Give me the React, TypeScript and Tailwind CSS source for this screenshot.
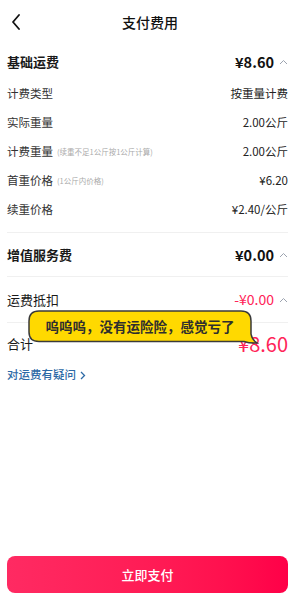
import type { ReactNode } from 'react'

const font = { fontFamily: '"Noto Sans CJK SC", "Noto Sans", sans-serif' }

function ChevronUp() {
  return (
    <svg width="9" height="6" viewBox="0 0 9 6" className="ml-[5px]" aria-hidden="true">
      <polyline points="1,5 4.5,1.5 8,5" fill="none" stroke="#9ca3af" strokeWidth="1" />
    </svg>
  )
}

function SubRow({ label, hint, value }: { label: string; hint?: string; value: string }) {
  return (
    <div className="flex h-[29px] items-center justify-between">
      <div className="flex items-center">
        <span className="text-[11.5px] text-[#333]">{label}</span>
        {hint && <span className="ml-[4px] text-[7.5px] text-[#aaa]">{hint}</span>}
      </div>
      <span className="text-[11.5px] text-[#222]">{value}</span>
    </div>
  )
}

function Divider() {
  return <div className="h-px bg-[#f0f0f0]" />
}

function SectionRow({ label, children, bold }: { label: string; children: ReactNode; bold?: boolean }) {
  return (
    <div className="flex h-full items-center justify-between">
      <span className={bold ? 'text-[13px] font-semibold text-[#1a1a1a]' : 'text-[13px] text-[#1a1a1a]'}>{label}</span>
      <div className="flex items-center">{children}</div>
    </div>
  )
}

export default function App() {
  return (
    <div className="relative flex h-[600px] w-[300px] flex-col bg-white" style={font}>
      {/* header */}
      <div className="relative flex h-[44px] items-center justify-center">
        <svg width="10" height="16" viewBox="0 0 10 16" className="absolute left-[11px] top-[14px]" aria-hidden="true">
          <polyline points="8,1 2,8 8,15" fill="none" stroke="#111" strokeWidth="1.8" strokeLinecap="round" strokeLinejoin="round" />
        </svg>
        <span className="text-[14px] font-medium text-[#111]">支付费用</span>
      </div>

      <div className="pl-[7px] pr-[12px]">
        <div className="h-[35px]">
          <SectionRow label="基础运费" bold>
            <span className="text-[14.5px] font-semibold text-[#111]">¥8.60</span>
            <ChevronUp />
          </SectionRow>
        </div>
        <SubRow label="计费类型" value="按重量计费" />
        <SubRow label="实际重量" value="2.00公斤" />
        <SubRow label="计费重量" hint="(续重不足1公斤按1公斤计算)" value="2.00公斤" />
        <SubRow label="首重价格" hint="(1公斤内价格)" value="¥6.20" />
        <SubRow label="续重价格" value="¥2.40/公斤" />
        <div className="h-[8px]" />
        <Divider />

        <div className="h-[43px]">
          <SectionRow label="增值服务费" bold>
            <span className="text-[14.5px] font-semibold text-[#111]">¥0.00</span>
            <ChevronUp />
          </SectionRow>
        </div>
        <Divider />

        <div className="h-[45px]">
          <SectionRow label="运费抵扣">
            <span className="text-[14px] text-[#ff2458]">-¥0.00</span>
            <ChevronUp />
          </SectionRow>
        </div>
        <Divider />

        <div className="h-[42px]">
          <SectionRow label="合计">
            <span className="text-[20px] leading-none text-[#ff2458]">¥8.60</span>
          </SectionRow>
        </div>

        <div className="mt-[2px] flex h-[16px] items-center text-[11.5px] font-medium text-[#2d6aa6]">
          对运费有疑问
          <svg width="6" height="9" viewBox="0 0 6 9" className="ml-[4px]" aria-hidden="true">
            <polyline points="1,1 4.5,4.5 1,8" fill="none" stroke="#2d6aa6" strokeWidth="1.3" />
          </svg>
        </div>
      </div>

      {/* speech bubble */}
      <div className="absolute left-[28px] top-[310px] h-[35px] w-[231px]">
        <svg width="231" height="35" viewBox="0 0 231 35" className="absolute inset-0" aria-hidden="true">
          <path
            d="M11,1 H213 Q223,1 223,11 V24 Q224,30 229,33 Q222,33.5 216,31.5 H11 Q1,31.5 1,22 V11 Q1,1 11,1 Z"
            fill="#ffd900"
            stroke="#3a3a3a"
            strokeWidth="1.5"
          />
        </svg>
        <div className="relative flex h-[32px] w-[224px] items-center justify-center text-[13.5px] font-bold text-[#2e2e2e]">
          呜呜呜，没有运险险，感觉亏了
        </div>
      </div>

      <div className="mt-auto mb-[7px] pl-[7px] pr-[12px]">
        <button
          type="button"
          className="flex h-[37px] w-full items-center justify-center rounded-[8px] bg-linear-to-r from-[#ff2a62] to-[#ff0048] text-[13px] font-medium text-white"
        >
          立即支付
        </button>
      </div>
    </div>
  )
}
